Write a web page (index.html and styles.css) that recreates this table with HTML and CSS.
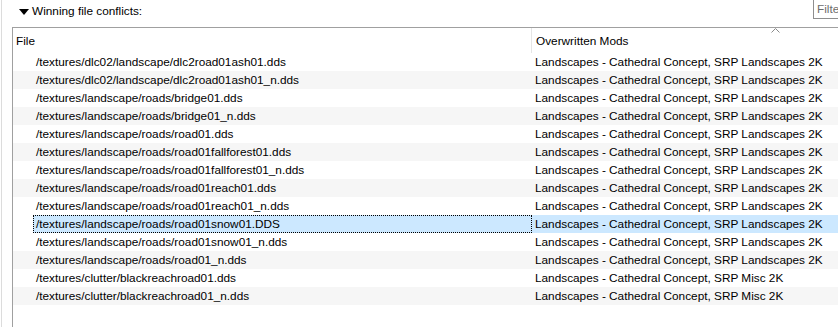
FILE: index.html
```html
<!DOCTYPE html>
<html>
<head>
<meta charset="utf-8">
<link rel="stylesheet" href="styles.css">
</head>
<body>
<div class="panel">
  <div class="topbar">
    <div class="title">
      <svg class="tri" width="10" height="6" viewBox="0 0 10 6"><polygon points="0,0 10,0 5,6" fill="#000"/></svg>
      <span>Winning file conflicts:</span>
    </div>
    <div class="filter">Filter</div>
  </div>
  <div class="box">
    <div class="header">
      <div class="hcol c1">File</div>
      <div class="hcol c2">Overwritten Mods</div>
      <svg class="sort" width="9" height="5" viewBox="0 0 9 5"><polyline points="0.5,4.5 4.5,0.5 8.5,4.5" fill="none" stroke="#8a8a8a" stroke-width="1"/></svg>
    </div>
    <div class="rows">
      <div class="row"><div class="c1"><span class="cell">/textures/dlc02/landscape/dlc2road01ash01.dds</span></div><div class="c2">Landscapes - Cathedral Concept, SRP Landscapes 2K</div></div>
      <div class="row alt"><div class="c1"><span class="cell">/textures/dlc02/landscape/dlc2road01ash01_n.dds</span></div><div class="c2">Landscapes - Cathedral Concept, SRP Landscapes 2K</div></div>
      <div class="row"><div class="c1"><span class="cell">/textures/landscape/roads/bridge01.dds</span></div><div class="c2">Landscapes - Cathedral Concept, SRP Landscapes 2K</div></div>
      <div class="row alt"><div class="c1"><span class="cell">/textures/landscape/roads/bridge01_n.dds</span></div><div class="c2">Landscapes - Cathedral Concept, SRP Landscapes 2K</div></div>
      <div class="row"><div class="c1"><span class="cell">/textures/landscape/roads/road01.dds</span></div><div class="c2">Landscapes - Cathedral Concept, SRP Landscapes 2K</div></div>
      <div class="row alt"><div class="c1"><span class="cell">/textures/landscape/roads/road01fallforest01.dds</span></div><div class="c2">Landscapes - Cathedral Concept, SRP Landscapes 2K</div></div>
      <div class="row"><div class="c1"><span class="cell">/textures/landscape/roads/road01fallforest01_n.dds</span></div><div class="c2">Landscapes - Cathedral Concept, SRP Landscapes 2K</div></div>
      <div class="row alt"><div class="c1"><span class="cell">/textures/landscape/roads/road01reach01.dds</span></div><div class="c2">Landscapes - Cathedral Concept, SRP Landscapes 2K</div></div>
      <div class="row"><div class="c1"><span class="cell">/textures/landscape/roads/road01reach01_n.dds</span></div><div class="c2">Landscapes - Cathedral Concept, SRP Landscapes 2K</div></div>
      <div class="row selected"><div class="c1"><span class="cell">/textures/landscape/roads/road01snow01.DDS</span></div><div class="c2">Landscapes - Cathedral Concept, SRP Landscapes 2K</div></div>
      <div class="row"><div class="c1"><span class="cell">/textures/landscape/roads/road01snow01_n.dds</span></div><div class="c2">Landscapes - Cathedral Concept, SRP Landscapes 2K</div></div>
      <div class="row alt"><div class="c1"><span class="cell">/textures/landscape/roads/road01_n.dds</span></div><div class="c2">Landscapes - Cathedral Concept, SRP Landscapes 2K</div></div>
      <div class="row"><div class="c1"><span class="cell">/textures/clutter/blackreachroad01.dds</span></div><div class="c2">Landscapes - Cathedral Concept, SRP Misc 2K</div></div>
      <div class="row alt"><div class="c1"><span class="cell">/textures/clutter/blackreachroad01_n.dds</span></div><div class="c2">Landscapes - Cathedral Concept, SRP Misc 2K</div></div>
    </div>
  </div>
</div>
</body>
</html>
```

FILE: styles.css
```css
html, body {
  margin: 0;
  padding: 0;
  background: #ffffff;
  overflow: hidden;
  height: 327px;
}

body {
  font-family: "Liberation Sans", Arial, sans-serif;
  font-size: 11.8px;
  color: #000;
}

.panel {
  margin-left: 1px;
  border-left: 1px solid #dcdcdc;
  height: 327px;
  padding-left: 10px;
  box-sizing: border-box;
}

.topbar {
  height: 27px;
  display: flex;
  align-items: flex-start;
  justify-content: space-between;
}

.title {
  display: flex;
  align-items: center;
  height: 22px;
  padding-left: 7px;
  gap: 3px;
}

.tri {
  display: block;
  margin-top: 1px;
}

.filter {
  margin-top: -2px;
  width: 40px;
  height: 19px;
  border: 1px solid #8e8e8e;
  box-sizing: content-box;
  color: #6d6d6d;
  padding-left: 3px;
  line-height: 21px;
  white-space: nowrap;
  overflow: hidden;
  margin-right: -20px;
}

.box {
  border-top: 1px solid #a0a0a0;
  border-left: 1px solid #a0a0a0;
  width: 900px;
  height: 400px;
}

.header {
  position: relative;
  height: 25px;
  display: flex;
}

.c1 {
  width: 518px;
  flex: none;
}

.hcol {
  line-height: 26px;
}

.hcol.c1 {
  padding-left: 3px;
  width: 515px;
  border-right: 1px solid #e5e5e5;
}

.hcol.c2 {
  padding-left: 4px;
}

.sort {
  position: absolute;
  left: 758px;
  top: 0px;
}

.row {
  display: flex;
  height: 18px;
  line-height: 18px;
  white-space: nowrap;
}

.row.alt {
  background: #f6f6f6;
}

.row .c1 {
  width: 519px;
  padding-left: 20px;
  box-sizing: border-box;
  display: flex;
}

.cell {
  padding-left: 3px;
  flex: 1;
}

.row .c2 {
  padding-left: 3px;
  flex: 1;
}

.row.selected .cell {
  background: #cce8ff;
  outline: 1px dotted #000;
  outline-offset: -1px;
}

.row.selected .c2 {
  background: #cce8ff;
}
```
